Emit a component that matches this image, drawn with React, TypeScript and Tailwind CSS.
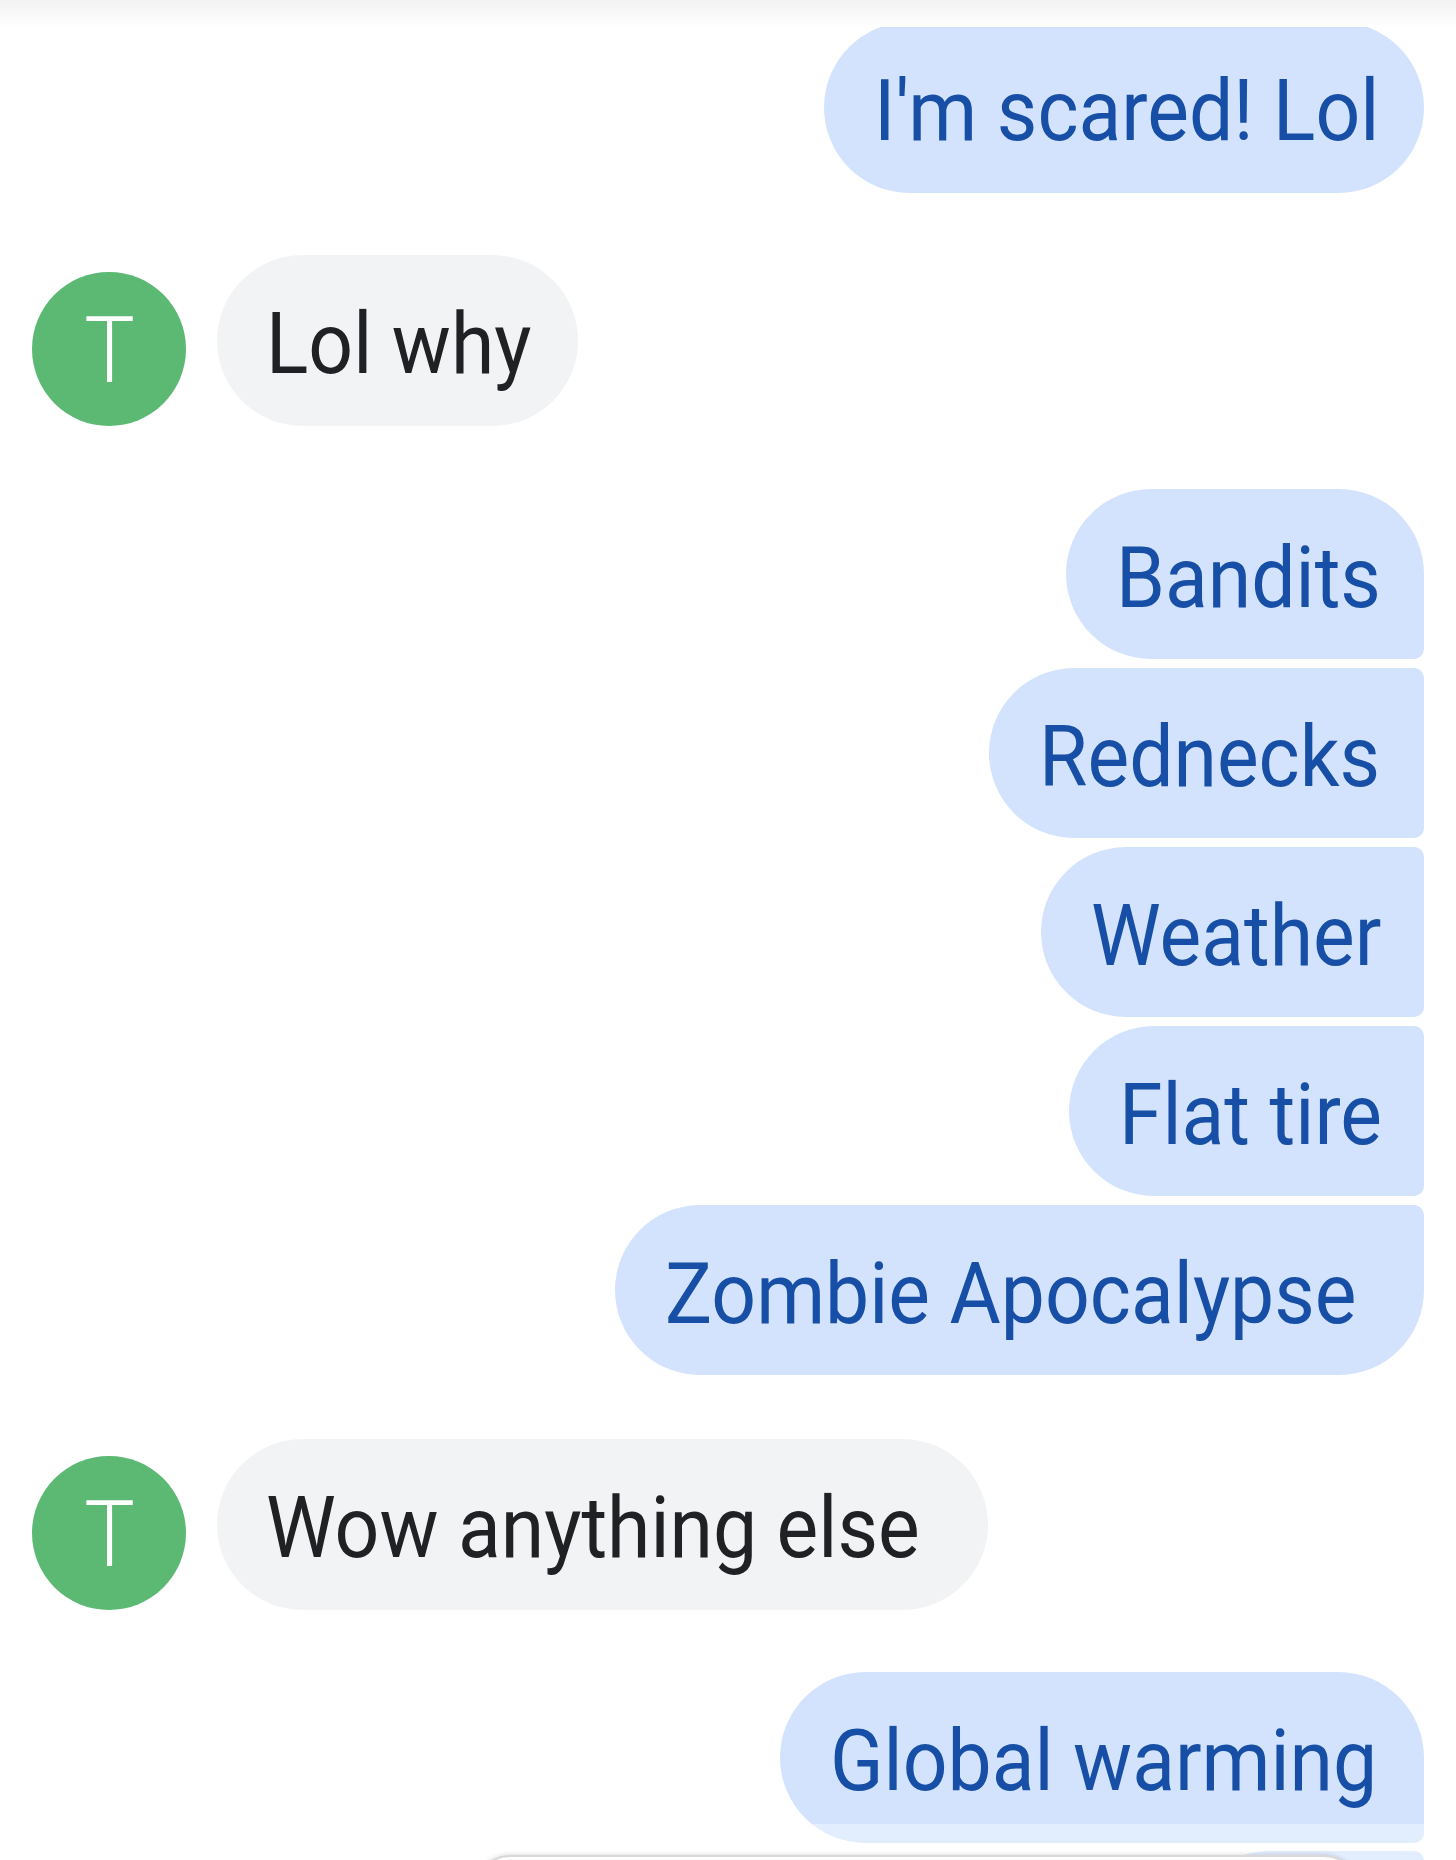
import React from "react";

type Shape = "single" | "first" | "middle" | "last";

const sentRadius: Record<Shape, string> = {
  single: "rounded-[86px]",
  first: "rounded-tl-[86px] rounded-tr-[86px] rounded-bl-[86px] rounded-br-[10px]",
  middle: "rounded-tl-[86px] rounded-bl-[86px] rounded-tr-[10px] rounded-br-[10px]",
  last: "rounded-tl-[86px] rounded-bl-[86px] rounded-br-[86px] rounded-tr-[10px]",
};

function Sent({ text, shape, width, extra = "" }: { text: string; shape: Shape; width: number; extra?: string }) {
  return (
    <div className="flex justify-end pr-[32px]">
      <div
        className={`h-[170px] flex items-center bg-[#d3e3fd] text-[#174ea6] text-[85px] leading-none pl-[50px] pt-[8px] ${sentRadius[shape]} ${extra}`}
        style={{ width }}
      >
        <span className="inline-block whitespace-nowrap scale-x-[0.925] origin-left">{text}</span>
      </div>
    </div>
  );
}

function Received({ text, width }: { text: string; width: number }) {
  return (
    <div className="flex items-end pl-[32px] gap-[31px]">
      <div className="w-[154px] h-[154px] rounded-full bg-[#5bb974] flex items-center justify-center text-white text-[92px] font-light leading-none pt-[4px]">
        <span className="inline-block scale-x-[0.92]">T</span>
      </div>
      <div
        className="h-[171px] flex items-center bg-[#f1f3f4] text-[#202124] text-[85px] leading-none pl-[49px] pt-[8px] rounded-[86px]"
        style={{ width }}
      >
        <span className="inline-block whitespace-nowrap scale-x-[0.925] origin-left">{text}</span>
      </div>
    </div>
  );
}

export default function App() {
  return (
    <div
      className="relative w-[1456px] h-[1860px] overflow-hidden bg-white"
      style={{ fontFamily: "Roboto, 'Noto Sans', sans-serif" }}
    >
      <div className="absolute top-0 left-0 right-0 h-[27px] bg-gradient-to-b from-[#f2f2f2] to-white" />
      <div className="flex flex-col pt-[22px]">
        <Sent text="I'm scared! Lol" shape="single" width={600} extra="h-[171px]" />
        <div className="h-[62px]" />
        <Received text="Lol why" width={361} />
        <div className="h-[63px]" />
        <div className="flex flex-col gap-[9px]">
          <Sent text="Bandits" shape="first" width={358} />
          <Sent text="Rednecks" shape="middle" width={435} />
          <Sent text="Weather" shape="middle" width={383} />
          <Sent text="Flat tire" shape="middle" width={355} />
          <Sent text="Zombie Apocalypse" shape="last" width={809} />
        </div>
        <div className="h-[64px]" />
        <Received text="Wow anything else" width={771} />
        <div className="h-[62px]" />
        <div className="flex flex-col gap-[8px]">
          <Sent text="Global warming" shape="first" width={644} extra="h-[171px]" />
          <Sent text="" shape="middle" width={240} />
        </div>
      </div>
      <div className="absolute left-0 right-0 top-[1824px] h-[40px] bg-white/35" />
      <div className="absolute left-[471px] w-[892px] top-[1855px] h-[80px] rounded-[40px] bg-white border-2 border-[#d9d9d9] shadow-[0_-1px_4px_rgba(0,0,0,0.12)]" />
    </div>
  );
}
